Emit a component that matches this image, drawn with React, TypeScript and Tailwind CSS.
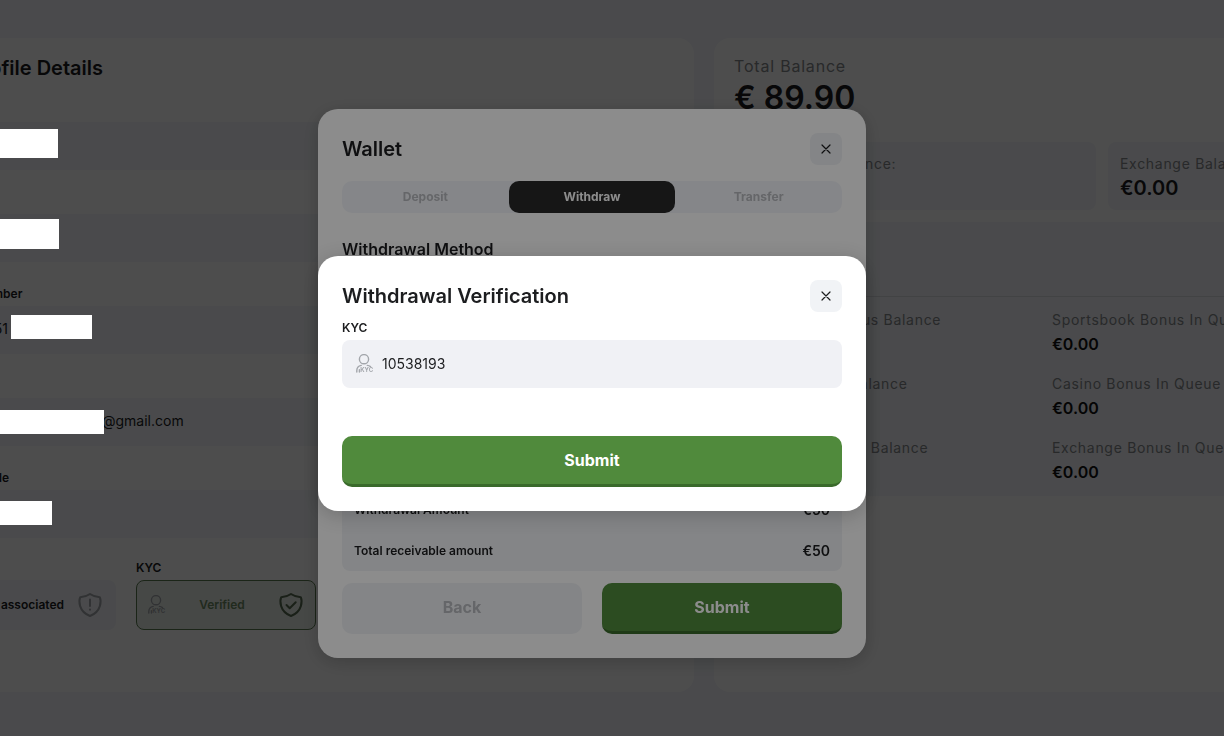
import React from "react";

// data
const PROFILE_FIELDS = [
    { id: "first-name", label: "First Name", prefix: "", value: "", mask: "top-[7px] left-0 w-[122px] h-[29px]" },
    { id: "last-name", label: "Last Name", prefix: "", value: "", mask: "top-[5px] left-0 w-[123px] h-[30px]" },
    { id: "phone", label: "Phone Number", prefix: "pl-[40px]", value: "+351", mask: "top-[9px] left-[75px] w-[81px] h-[24px]" },
    { id: "email", label: "Email", prefix: "pl-[166px]", value: "@gmail.com", mask: "top-[12px] left-0 w-[168px] h-[24px]" },
    { id: "mobile-code", label: "Mobile Code", prefix: "", value: "", mask: "top-[11px] left-0 w-[116px] h-[24px]" },
];

const BALANCES = [
    { label: "Sportsbook Balance:", value: "€89.90" },
    { label: "Exchange Balance:", value: "€0.00" },
];

const BONUSES = ["Sportsbook", "Casino", "Exchange"];

const SUMMARY = ["Withdrawal Amount", "Total receivable amount"];

const TABS = ["Deposit", "Withdraw", "Transfer"];

// icons
const KycIcon = () => (
    <svg width="18" height="20" viewBox="0 0 18 20" fill="none" stroke="#a3a6ab" aria-hidden="true">
        <circle cx="8" cy="5.2" r="4.6" strokeWidth="1.4" />
        <path d="M0.800 18v-1.400c0-2.600 1.700-4.600 4.400-5.200M11.300 11.400c1.300.1 2.300.5 3.200 1.200M3.400 18v-2.400" strokeWidth="1.4" strokeLinecap="round" />
        <text x="4.300" y="18.400" fontSize="6" fontWeight="700" fontFamily="Inter, sans-serif" fill="#a3a6ab" stroke="none">
            KYC
        </text>
    </svg>
);

const Shield = ({ color, children }: { color: string; children: React.ReactNode }) => (
    <svg
        width="26"
        height="26"
        viewBox="0 0 26 26"
        fill="none"
        stroke={color}
        strokeWidth="2"
        strokeLinecap="round"
        strokeLinejoin="round"
        aria-hidden="true"
    >
        <path d="M13 2c2.800 2 6 3 9.800 3.200C24.200 8.500 24.800 19.500 13 24 1.200 19.500 1.800 8.500 3.200 5.200 7 5 10.200 4 13 2z" />
        {children}
    </svg>
);

const CloseButton = () => (
    <button
        type="button"
        aria-label="Close"
        className="flex size-8 items-center justify-center rounded-lg bg-[#f1f3f6]"
    >
        <svg width="10" height="10" viewBox="0 0 10 10" stroke="#1c1d1f" strokeWidth="1.2" strokeLinecap="round">
            <path d="M1 1l8 8M9 1l-8 8" />
        </svg>
    </button>
);

const Profile = () => {
    return (
        <section className="w-[778px] shrink-0 rounded-2xl bg-white px-5 pt-4">
            <h2 className="w-[167px] text-right text-xl font-semibold leading-7 whitespace-nowrap">Profile Details</h2>
            <div className="mt-5 flex flex-col gap-6">
                {PROFILE_FIELDS.map((field) => (
                    <div key={field.id}>
                        <label htmlFor={field.id} className="mb-1 block text-xs font-semibold leading-4">
                            {field.label}
                        </label>
                        <div className="relative h-12 rounded-lg bg-[#f4f6fa]">
                            <input
                                id={field.id}
                                readOnly
                                defaultValue={field.value}
                                className={`size-full bg-transparent pb-1 text-sm outline-none ${field.prefix}`}
                            />
                            <span className={`absolute z-50 bg-white ${field.mask}`} />
                        </div>
                    </div>
                ))}
            </div>

            {/* verification state */}
            <div className="mt-[22px] flex gap-5 text-xs font-semibold">
                <div className="w-[180px]">
                    <p className="mb-1 leading-4">2FA</p>
                    <div className="flex h-[50px] items-center justify-end gap-[13px] rounded-lg bg-[#f4f6fa] pr-[13px]">
                        <span>Not associated</span>
                        <Shield color="#a3a6ab">
                            <path d="M13 7.500v6.500M13 17.500v.3" />
                        </Shield>
                    </div>
                </div>
                <div className="w-[180px]">
                    <p className="mb-1 leading-4">KYC</p>
                    <div className="flex h-[50px] items-center justify-between rounded-lg border border-[#5a7a50] bg-[#e8efe8] px-[11px] text-[#6d8b64]">
                        <KycIcon />
                        <span>Verified</span>
                        <Shield color="#566b50">
                            <path d="M8.500 13l3.200 3.200 6-6" />
                        </Shield>
                    </div>
                </div>
            </div>
        </section>
    );
};

const Balance = () => {
    return (
        <section className="w-[776px] shrink-0 rounded-2xl bg-white px-5 pt-[18px]">
            <p className="leading-5 tracking-wider text-[#85888c]">Total Balance</p>
            <p className="mt-0.5 text-[32px] font-semibold leading-10">€ 89.90</p>

            <div className="mt-6 grid grid-cols-2 gap-3">
                {BALANCES.map((item) => (
                    <div key={item.label} className="rounded-lg bg-[#f4f6fa] px-3 pt-3 pb-2">
                        <p className="text-sm tracking-wider text-[#85888c]">{item.label}</p>
                        <p className="text-xl font-semibold leading-7">{item.value}</p>
                    </div>
                ))}
            </div>

            <div className="mt-3 rounded-lg bg-[#f4f6fa] px-3 pb-3">
                <div className="h-[75px] border-b border-[#d9dce1]" />
                <div className="flex flex-col gap-[18px] pt-[13px]">
                    {BONUSES.map((name) => (
                        <div key={name} className="flex text-sm tracking-wider text-[#85888c]">
                            <div className="w-[306px]">
                                <p>{name} Bonus Balance</p>
                                <p className="mt-0.5 text-base font-semibold tracking-normal text-[#111]">€0.00</p>
                            </div>
                            <div>
                                <p>{name} Bonus In Queue</p>
                                <p className="mt-0.5 text-base font-semibold tracking-normal text-[#111]">€0.00</p>
                            </div>
                        </div>
                    ))}
                </div>
            </div>
        </section>
    );
};

const Wallet = () => {
    return (
        <div className="fixed inset-0 z-10 flex items-center justify-center bg-black/45 pt-[31px] pr-10">
            <div role="dialog" aria-label="Wallet" className="w-[548px] rounded-[20px] bg-white p-6 shadow-[0_4px_20px_rgba(0,0,0,0.2)]">
                <div className="flex items-center justify-between">
                    <h2 className="text-xl font-semibold">Wallet</h2>
                    <CloseButton />
                </div>

                {/* tabs */}
                <div className="mt-4 grid h-8 grid-cols-3 rounded-[10px] bg-[#f3f5f9] text-xs font-bold">
                    {TABS.map((tab) => (
                        <button
                            key={tab}
                            type="button"
                            className={tab === "Withdraw" ? "rounded-[10px] bg-[#282828] text-white" : "text-[#b8babf]"}
                        >
                            {tab}
                        </button>
                    ))}
                </div>

                <h3 className="mt-6 font-semibold">Withdrawal Method</h3>

                {/* summary */}
                <div className="mt-4 flex h-[294px] flex-col justify-end rounded-lg bg-[#f1f3f6] px-3">
                    {SUMMARY.map((label) => (
                        <div key={label} className="flex h-[41px] items-center justify-between font-semibold">
                            <span className="text-xs">{label}</span>
                            <span className="text-sm">€50</span>
                        </div>
                    ))}
                </div>

                <div className="mt-3 grid grid-cols-2 gap-5 font-bold">
                    <button type="button" className="h-[51px] rounded-[10px] border-b-3 border-[#f1f3f6] bg-[#f1f3f6] text-[#b8babf]">
                        Back
                    </button>
                    <button type="button" className="h-[51px] rounded-[10px] border-b-3 border-[#3a6a2b] bg-[#508a3c] text-white">
                        Submit
                    </button>
                </div>
            </div>
        </div>
    );
};

const Verification = () => {
    return (
        <div className="fixed inset-0 z-20 flex items-center justify-center bg-black/45 pt-[31px] pr-10">
            <form
                role="dialog"
                aria-label="Withdrawal Verification"
                onSubmit={(e) => e.preventDefault()}
                className="w-[548px] rounded-[20px] bg-white p-6 shadow-[0_4px_20px_rgba(0,0,0,0.2)]"
            >
                <div className="flex items-center justify-between">
                    <h2 className="text-xl font-semibold">Withdrawal Verification</h2>
                    <CloseButton />
                </div>
                <label htmlFor="kyc" className="mt-2 mb-1 block text-xs font-semibold leading-4">
                    KYC
                </label>
                <div className="flex h-12 items-center gap-2 rounded-lg bg-[#f0f1f5] px-[14px]">
                    <KycIcon />
                    <input id="kyc" defaultValue="10538193" className="min-w-0 flex-1 bg-transparent text-sm outline-none" />
                </div>
                <button
                    type="submit"
                    className="mt-12 h-[51px] w-full rounded-[10px] border-b-3 border-[#3a6a2b] bg-[#508a3c] font-bold text-white"
                >
                    Submit
                </button>
            </form>
        </div>
    );
};

const App = () => {
    return (
        <main className="min-h-screen overflow-hidden bg-[#f4f6fa] font-[Inter,sans-serif] text-[#1c1d1f]">
            <div className="-ml-[84px] flex h-[692px] gap-5 pt-[38px]">
                <Profile />
                <Balance />
            </div>
            <Wallet />
            <Verification />
        </main>
    );
};

export default App;
